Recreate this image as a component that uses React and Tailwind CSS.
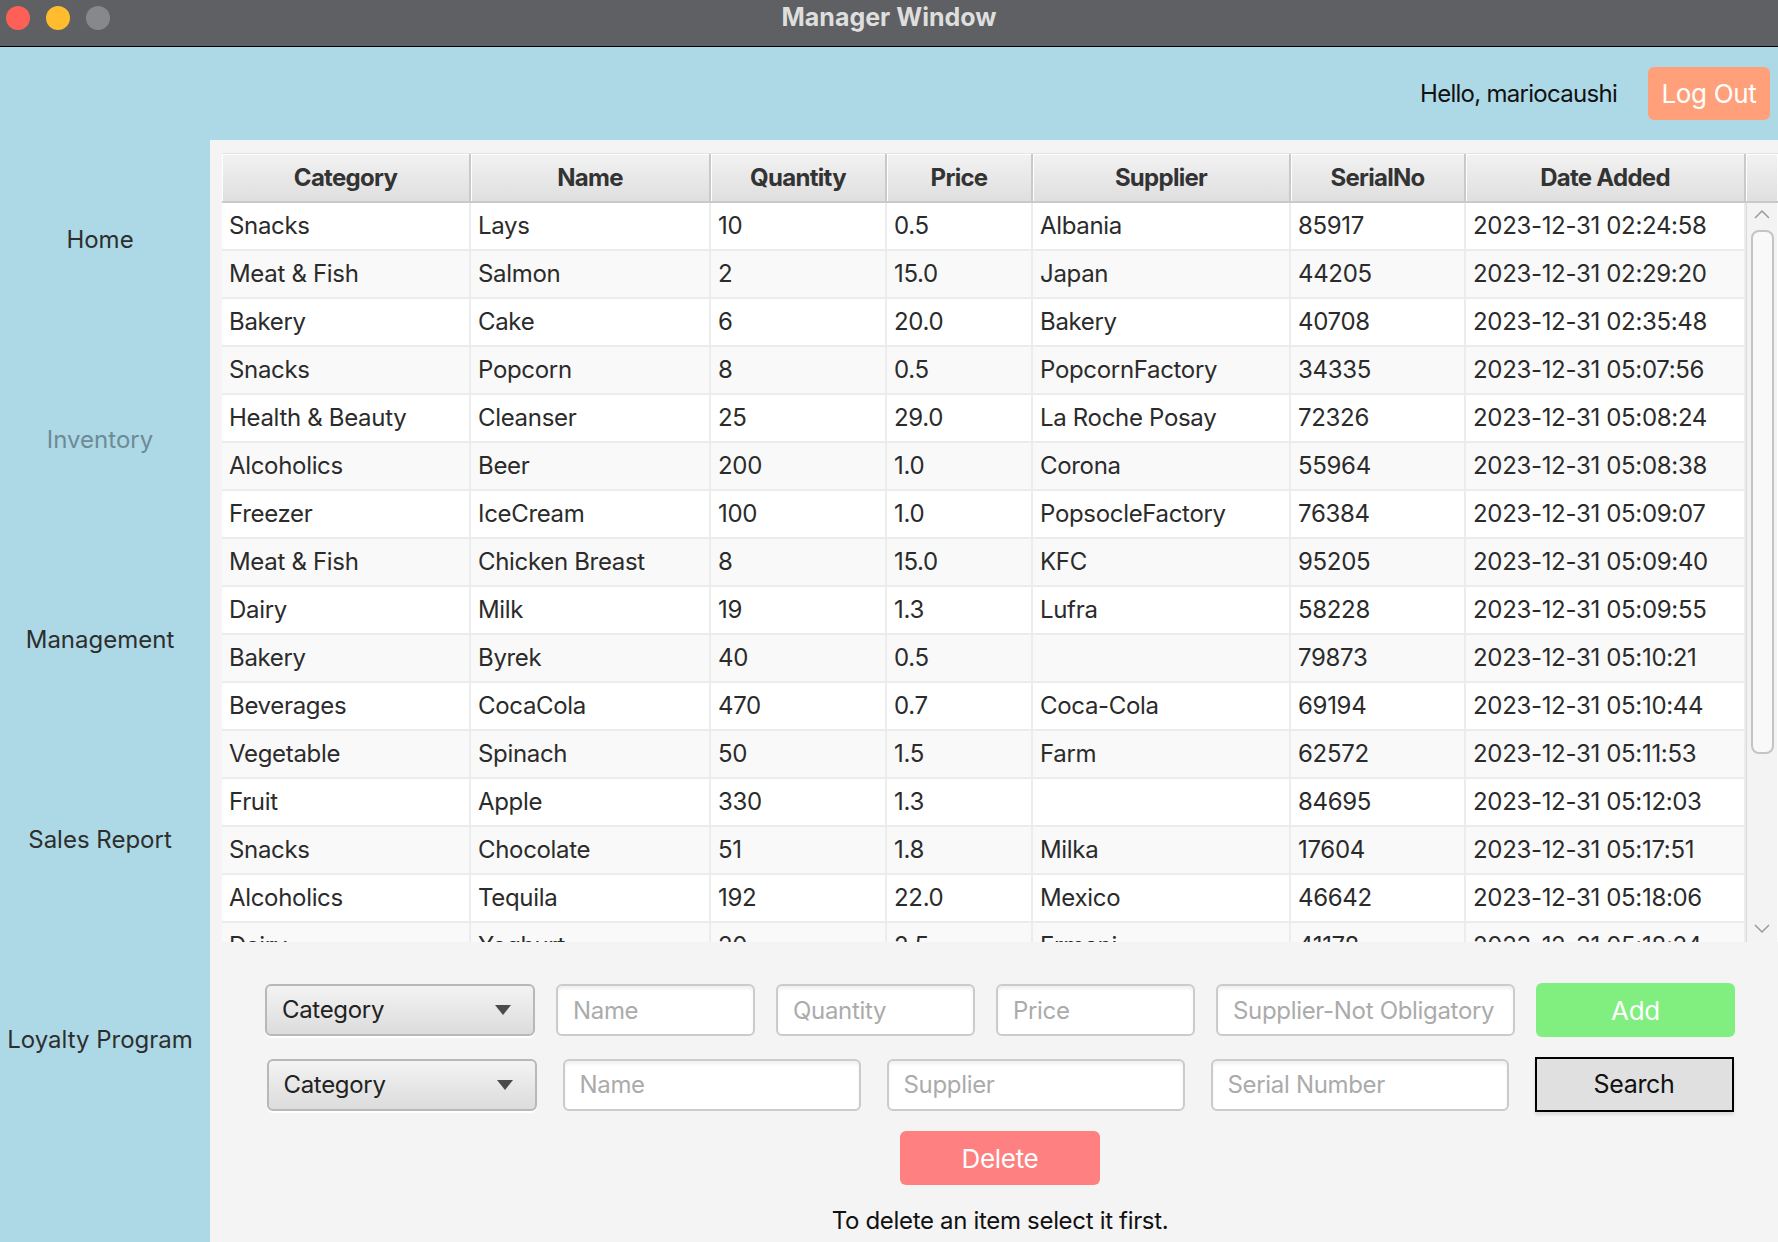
import { useState } from 'react'

const columns = [
  { key: 'category', label: 'Category', w: 'w-[249px]' },
  { key: 'name', label: 'Name', w: 'w-[240px]' },
  { key: 'quantity', label: 'Quantity', w: 'w-[176px]' },
  { key: 'price', label: 'Price', w: 'w-[146px]' },
  { key: 'supplier', label: 'Supplier', w: 'w-[258px]' },
  { key: 'serial', label: 'SerialNo', w: 'w-[175px]' },
  { key: 'date', label: 'Date Added', w: 'w-[280px]' },
]

const items = [
  ['Snacks', 'Lays', '10', '0.5', 'Albania', '85917', '2023-12-31 02:24:58'],
  ['Meat & Fish', 'Salmon', '2', '15.0', 'Japan', '44205', '2023-12-31 02:29:20'],
  ['Bakery', 'Cake', '6', '20.0', 'Bakery', '40708', '2023-12-31 02:35:48'],
  ['Snacks', 'Popcorn', '8', '0.5', 'PopcornFactory', '34335', '2023-12-31 05:07:56'],
  ['Health & Beauty', 'Cleanser', '25', '29.0', 'La Roche Posay', '72326', '2023-12-31 05:08:24'],
  ['Alcoholics', 'Beer', '200', '1.0', 'Corona', '55964', '2023-12-31 05:08:38'],
  ['Freezer', 'IceCream', '100', '1.0', 'PopsocleFactory', '76384', '2023-12-31 05:09:07'],
  ['Meat & Fish', 'Chicken Breast', '8', '15.0', 'KFC', '95205', '2023-12-31 05:09:40'],
  ['Dairy', 'Milk', '19', '1.3', 'Lufra', '58228', '2023-12-31 05:09:55'],
  ['Bakery', 'Byrek', '40', '0.5', '', '79873', '2023-12-31 05:10:21'],
  ['Beverages', 'CocaCola', '470', '0.7', 'Coca-Cola', '69194', '2023-12-31 05:10:44'],
  ['Vegetable', 'Spinach', '50', '1.5', 'Farm', '62572', '2023-12-31 05:11:53'],
  ['Fruit', 'Apple', '330', '1.3', '', '84695', '2023-12-31 05:12:03'],
  ['Snacks', 'Chocolate', '51', '1.8', 'Milka', '17604', '2023-12-31 05:17:51'],
  ['Alcoholics', 'Tequila', '192', '22.0', 'Mexico', '46642', '2023-12-31 05:18:06'],
  ['Dairy', 'Yoghurt', '20', '2.5', 'Ermeni', '41178', '2023-12-31 05:18:24'],
]

const navItems = ['Home', 'Inventory', 'Management', 'Sales Report', 'Loyalty Program']

const Combo = ({ className }) => (
  <div className={`h-[52px] w-[270px] flex items-center justify-between pl-[15px] pr-[22px] rounded-[6px] border-2 border-[#b8b8b8] bg-gradient-to-b from-[#f3f3f3] to-[#dcdcdc] shadow-[0_2px_0_#ffffff] text-[24px] text-[#222] ${className || ''}`}>
    <span>Category</span>
    <svg width="16" height="10" viewBox="0 0 16 10">
      <polygon points="0,0 16,0 8,10" fill="#4a4a4a" />
    </svg>
  </div>
)

const Field = ({ placeholder, w }) => (
  <input
    placeholder={placeholder}
    className={`h-[52px] ${w} px-[15px] rounded-[6px] border-2 border-[#cbcbcb] bg-white shadow-[inset_0_3px_3px_rgba(0,0,0,0.06)] text-[24px] text-[#222] placeholder:text-[#ababab] outline-none`}
  />
)

export default function App() {
  const [selected] = useState(null)

  return (
    <div className="w-[1778px] h-[1242px] flex flex-col overflow-hidden font-['Inter',sans-serif] tracking-[-0.02em]">
      {/* Title bar */}
      <div className="h-[47px] shrink-0 bg-[#5f6063] border-b border-black grid grid-cols-[1fr_auto_1fr] items-start">
        <div className="flex gap-[16px] pl-[6px] pt-[6px]">
          <div className="w-[24px] h-[24px] rounded-full bg-[#fe5f57]"></div>
          <div className="w-[24px] h-[24px] rounded-full bg-[#febc2e]"></div>
          <div className="w-[24px] h-[24px] rounded-full bg-[#87888a]"></div>
        </div>
        <div className="pt-[2px] text-[25px] leading-[30px] font-bold text-[#dedede] tracking-normal">Manager Window</div>
        <div></div>
      </div>

      <div className="flex-1 flex flex-col bg-[#add8e6] min-h-0">
        {/* Greeting */}
        <div className="h-[93px] shrink-0 flex items-center justify-end pr-[8px] gap-[31px]">
          <span className="text-[24px] text-[#111] tracking-[-0.03em]">Hello, mariocaushi</span>
          <button className="w-[122px] h-[53px] rounded-[6px] bg-[#ffa07a] text-white text-[26px]">Log Out</button>
        </div>

        <div className="flex-1 flex min-h-0">
          {/* Sidebar */}
          <div className="w-[210px] shrink-0 flex flex-col pr-[10px]">
            {navItems.map((n) => (
              <div
                key={n}
                className={`h-[200px] flex items-center justify-center text-[24px] tracking-normal whitespace-nowrap ${n === 'Inventory' ? 'text-[#6d8b95]' : 'text-[#2e2e2e]'}`}
              >
                {n}
              </div>
            ))}
          </div>

          {/* Main panel */}
          <div className="flex-1 bg-[#f4f4f4] flex flex-col pl-[12px] pt-[13px]">
            {/* Table */}
            <div className="h-[789px] shrink-0 flex flex-col overflow-hidden bg-white">
              <div className="h-[50px] shrink-0 flex border-t border-[#e4e4e4] border-b-2 border-b-[#c9c9c9]">
                {columns.map((c) => (
                  <div
                    key={c.key}
                    className={`${c.w} shrink-0 flex items-center justify-center bg-gradient-to-b from-[#f2f2f2] to-[#dfdfdf] border-r-2 border-[#c9c9c9] shadow-[inset_1px_1px_0_#ffffff] text-[24px] font-bold text-[#333] tracking-[-0.03em]`}
                  >
                    {c.label}
                  </div>
                ))}
                <div className="w-[31px] shrink-0 bg-gradient-to-b from-[#f2f2f2] to-[#dfdfdf] shadow-[inset_1px_1px_0_#ffffff]"></div>
              </div>

              <div className="flex-1 flex min-h-0">
                <div className="w-[1524px] shrink-0 flex flex-col overflow-hidden">
                  {items.map((row, i) => (
                    <div
                      key={i}
                      className={`h-[48px] shrink-0 flex border-b-2 border-[#ececec] ${selected === i ? 'bg-[#0096c9]' : i % 2 === 0 ? 'bg-white' : 'bg-[#f9f9f9]'}`}
                    >
                      {row.map((v, j) => (
                        <div
                          key={j}
                          className={`${columns[j].w} shrink-0 flex items-center pl-[7px] border-r-2 border-[#ececec] text-[24px] text-[#2b2b2b] whitespace-nowrap overflow-hidden`}
                        >
                          {v}
                        </div>
                      ))}
                    </div>
                  ))}
                </div>

                {/* Scrollbar */}
                <div className="w-[31px] shrink-0 flex flex-col items-center bg-[#f3f3f3] border-l border-[#dadada]">
                  <svg className="mt-[6px]" width="16" height="10" viewBox="0 0 16 10">
                    <polyline points="1,9 8,2 15,9" fill="none" stroke="#9a9a9a" strokeWidth="1.5" />
                  </svg>
                  <div className="mt-[11px] w-[23px] h-[524px] rounded-[8px] border-2 border-[#c4c4c4] bg-[#f9f9f9]"></div>
                  <svg className="mt-[170px]" width="16" height="10" viewBox="0 0 16 10">
                    <polyline points="1,1 8,8 15,1" fill="none" stroke="#9a9a9a" strokeWidth="1.5" />
                  </svg>
                </div>
              </div>
            </div>

            {/* Controls */}
            <div className="flex flex-col items-center pt-[41px]">
              <div className="flex items-center gap-[21px]">
                <Combo />
                <Field placeholder="Name" w="w-[199px]" />
                <Field placeholder="Quantity" w="w-[199px]" />
                <Field placeholder="Price" w="w-[199px]" />
                <Field placeholder="Supplier-Not Obligatory" w="w-[299px]" />
                <button className="w-[199px] h-[54px] rounded-[6px] bg-[#80ef80] text-white text-[26px]">Add</button>
              </div>

              <div className="mt-[20px] flex items-center gap-[26px]">
                <Combo />
                <Field placeholder="Name" w="w-[298px]" />
                <Field placeholder="Supplier" w="w-[298px]" />
                <Field placeholder="Serial Number" w="w-[298px]" />
                <button className="w-[199px] h-[55px] bg-[#e0e0e0] border-2 border-black text-[#111] text-[25px] shadow-[0_3px_3px_rgba(0,0,0,0.1)]">Search</button>
              </div>

              <button className="mt-[19px] w-[200px] h-[54px] rounded-[6px] bg-[#ff8080] text-white text-[26px]">Delete</button>

              <p className="mt-[21px] leading-[30px] text-[24px] text-[#111]">To delete an item select it first.</p>
            </div>
          </div>
        </div>
      </div>
    </div>
  )
}
